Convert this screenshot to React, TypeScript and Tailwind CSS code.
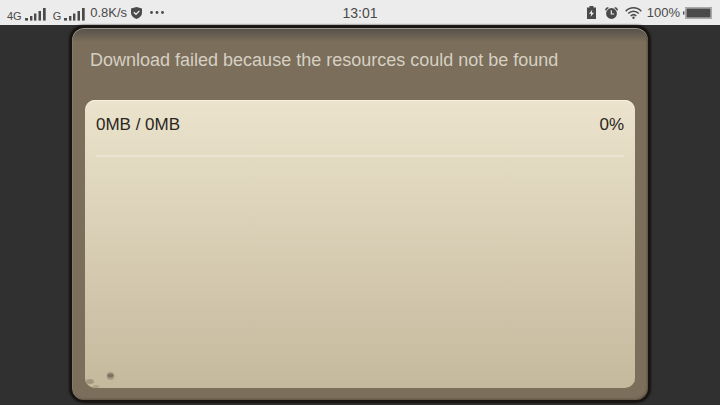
import { clsx } from 'clsx';

function SignalBars({ className }: { className?: string }) {
  return (
    <svg className={clsx('h-[14px] w-[21px]', className)} viewBox="0 0 21 14" fill="currentColor">
      <rect x="0" y="11" width="3" height="2.6" />
      <rect x="5" y="9" width="2.4" height="4.6" />
      <rect x="9" y="6.5" width="2.4" height="7.1" />
      <rect x="13.5" y="4" width="2.5" height="9.6" />
      <rect x="18" y="1" width="2.7" height="12.6" />
    </svg>
  );
}

function ShieldIcon() {
  return (
    <svg className="ml-1 h-3 w-[11px]" viewBox="0 0 11 12">
      <path d="M5.5 0 L11 1.6 V5.5 C11 8.6 8.6 11 5.5 12 C2.4 11 0 8.6 0 5.5 V1.6 Z" fill="currentColor" />
      <path d="M2.8 5.2 L5 7.3 L8.4 3.9" fill="none" stroke="#ececec" strokeWidth="1.3" />
    </svg>
  );
}

function ChargingIcon() {
  return (
    <svg className="h-[13px] w-[9px]" viewBox="0 0 9 13">
      <path d="M2.5 0 H6.5 V1.5 H9 V13 H0 V1.5 H2.5 Z" fill="currentColor" />
      <path d="M5.2 3.8 L2 7.8 H4.1 L3.7 10.8 L7 6.7 H4.9 Z" fill="#ececec" />
    </svg>
  );
}

function AlarmIcon() {
  return (
    <svg className="ml-[9px] h-3 w-[13px]" viewBox="0 0 13 12">
      <circle cx="6.5" cy="6.5" r="5.4" fill="currentColor" />
      <path d="M0.7 3.3 A3 3 0 0 1 3.4 0.8 M9.6 0.8 A3 3 0 0 1 12.3 3.3" fill="none" stroke="currentColor" strokeWidth="1.6" />
      <path d="M6.3 3.2 V7 H9.2" fill="none" stroke="#ececec" strokeWidth="1.2" />
    </svg>
  );
}

function WifiIcon() {
  return (
    <svg className="ml-[7px] h-3 w-[17px]" viewBox="0 0 17 12" fill="none" stroke="currentColor" strokeWidth="1.5">
      <path d="M0.7 4.2 C5 -0.4 12 -0.4 16.3 4.2" />
      <path d="M3.2 6.6 C6.2 3.5 10.8 3.5 13.8 6.6" />
      <path d="M5.7 9 C7.4 7.3 9.6 7.3 11.3 9" />
      <circle cx="8.5" cy="10.8" r="1.2" fill="currentColor" stroke="none" />
    </svg>
  );
}

function BatteryIcon() {
  return (
    <svg className="ml-[3px] h-3 w-[29px]" viewBox="0 0 29 12">
      <rect x="0" y="4.4" width="1.4" height="3.2" fill="currentColor" />
      <rect x="2.4" y="0.4" width="26.2" height="11.2" fill="none" stroke="#999999" strokeWidth="0.8" />
      <rect x="3.4" y="1.4" width="24.2" height="9.2" fill="currentColor" />
    </svg>
  );
}

function StatusBar() {
  return (
    <header className="grid h-[25px] grid-cols-[1fr_auto_1fr] items-center bg-[#ececec] px-[7px] text-[#4a4a4a]">
      <div className="flex items-center">
        <span className="pt-1.5 text-[11px] leading-4">4G</span>
        <SignalBars className="ml-[3px] mt-0.5" />
        <span className="ml-[7px] pt-1.5 text-[11px] leading-4">G</span>
        <SignalBars className="ml-[3px] mt-0.5" />
        <span className="ml-[5px] text-[13px] leading-4">0.8K/s</span>
        <ShieldIcon />
        <svg className="ml-2 h-[3px] w-[14px]" viewBox="0 0 14 3" fill="currentColor">
          <circle cx="1.5" cy="1.5" r="1.4" />
          <circle cx="7" cy="1.5" r="1.4" />
          <circle cx="12.5" cy="1.5" r="1.4" />
        </svg>
      </div>
      <time className="text-sm leading-4">13:01</time>
      <div className="flex items-center justify-end pr-px">
        <ChargingIcon />
        <AlarmIcon />
        <WifiIcon />
        <span className="ml-[5px] text-[13px] leading-4">100%</span>
        <BatteryIcon />
      </div>
    </header>
  );
}

export default function App() {
  return (
    <div className="flex min-h-screen flex-col bg-[#303030] font-['Liberation_Sans',Arial,sans-serif]">
      <StatusBar />
      <main className="flex flex-1 flex-col px-[70px] pt-px pb-[3px]">
        <section className="flex flex-1 flex-col rounded-[14px] border-2 border-[#171411] bg-[#7b6e5a] bg-linear-to-b from-[#55504a] to-[#7b6e5a] to-[14px] px-[13px] pb-3 shadow-[0_0_2px_1px_#171411,inset_0_1px_0_#9a9791,inset_1px_0_1px_#8a7d69,inset_-1px_-1px_2px_#5c5140]">
          <h1 className="px-[5px] pt-5 pb-7 text-lg leading-6 text-[#d6d0c3]">
            Download failed because the resources could not be found
          </h1>
          <div className="relative flex-1 rounded-[10px] bg-linear-to-b from-[#ebe3cc] to-[#c5b99d] px-[11px] shadow-[inset_0_1px_0_#f8f1df]">
            <div className="flex justify-between border-b-2 border-[#eae3d0] pt-3 pb-[17px] text-[17px] leading-[26px] text-[#2c261c]">
              <span>0MB / 0MB</span>
              <span>0%</span>
            </div>
            <svg className="absolute bottom-0 left-0 h-5 w-8" viewBox="0 0 32 20">
              <circle cx="25.5" cy="8" r="4" fill="#a99d85" />
              <ellipse cx="25.5" cy="7.5" rx="3" ry="2" fill="#7c725f" />
              <ellipse cx="5" cy="13.5" rx="4" ry="2.5" fill="#a2967c" />
              <ellipse cx="11" cy="18.5" rx="3" ry="1.5" fill="#aea287" />
            </svg>
          </div>
        </section>
      </main>
    </div>
  );
}
